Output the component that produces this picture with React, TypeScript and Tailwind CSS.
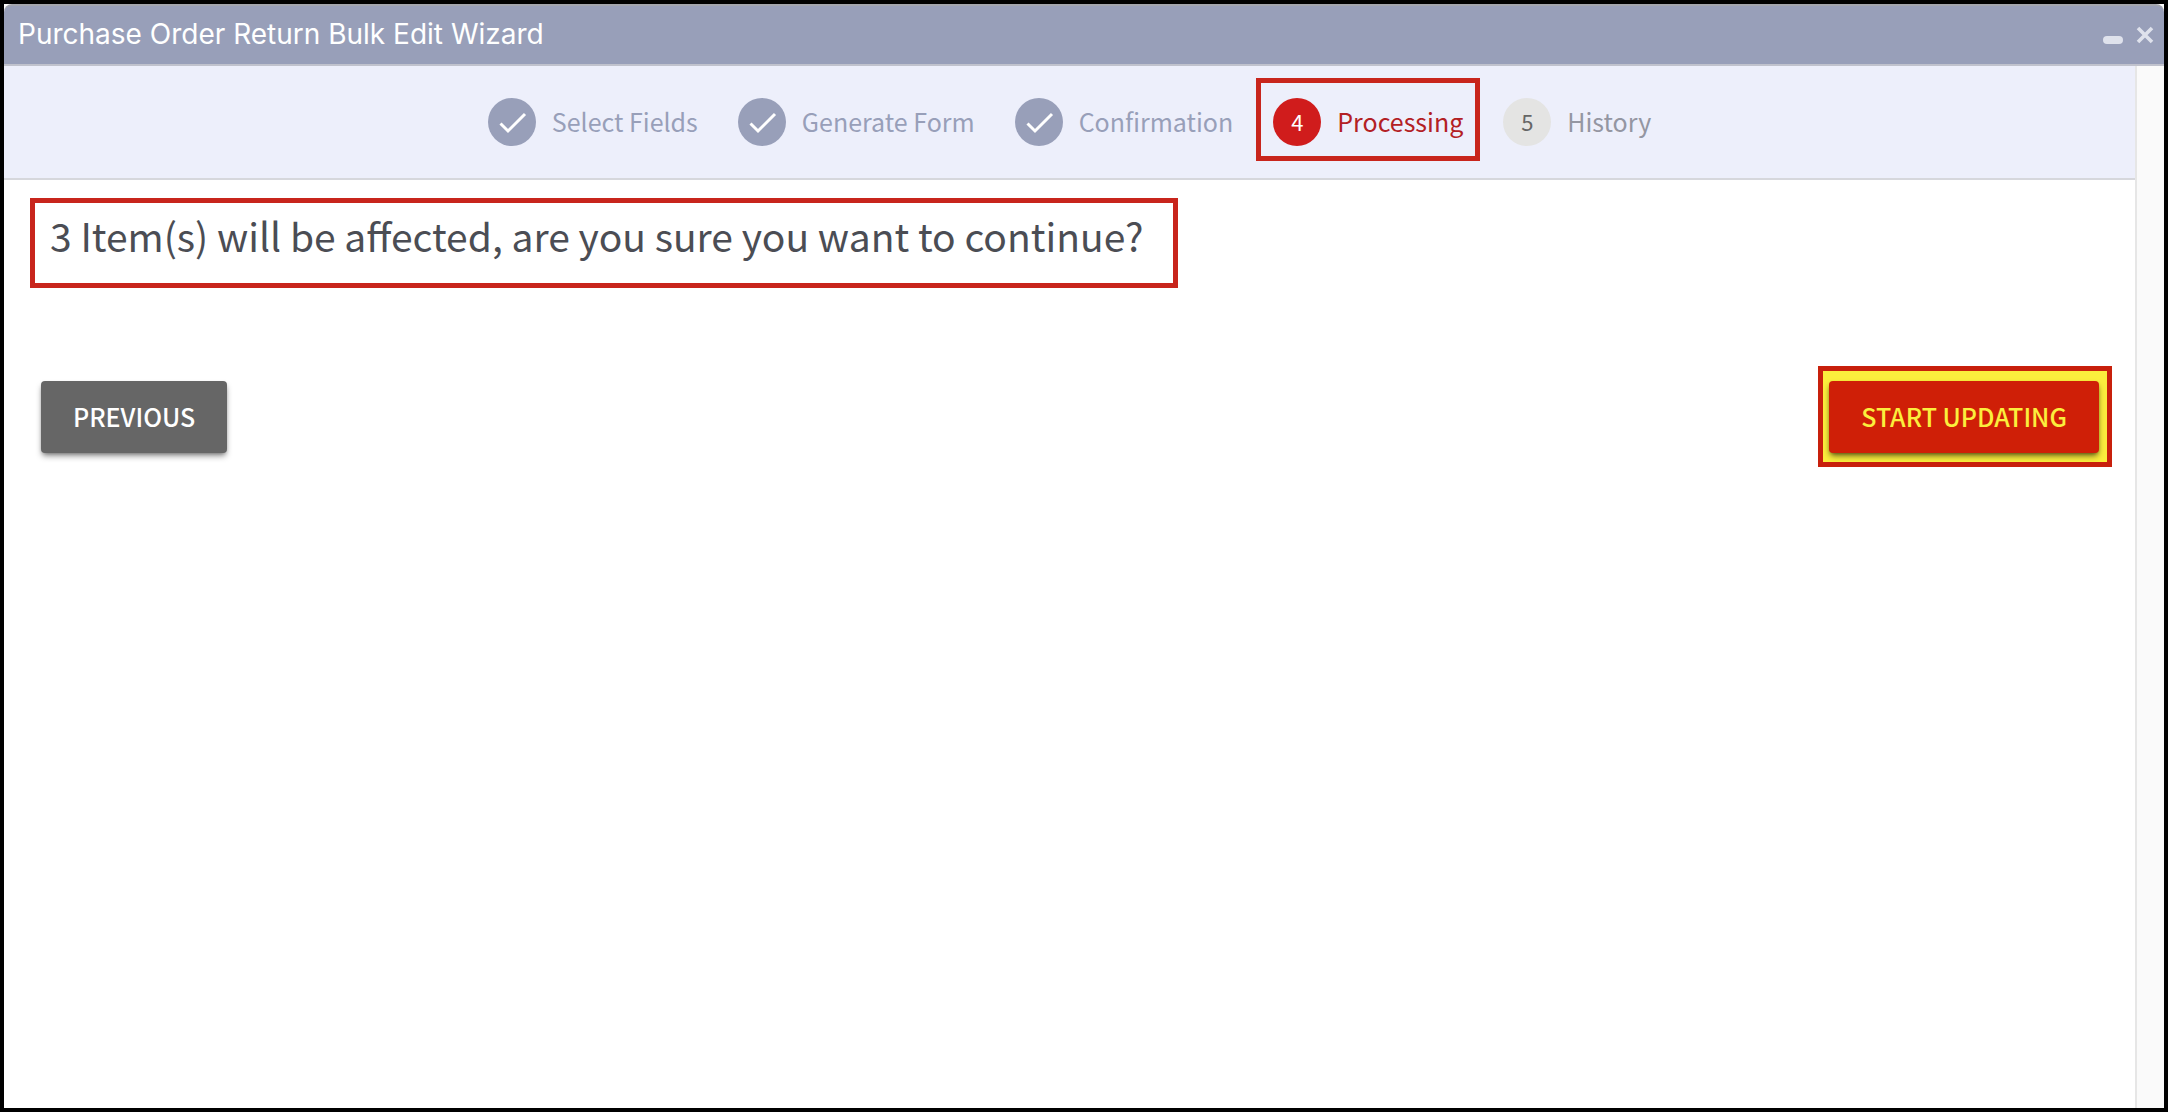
import clsx from "clsx";

type StepStatus = "done" | "active" | "upcoming";

interface Step {
  label: string;
  status: StepStatus;
}

const steps: Step[] = [
  { label: "Select Fields", status: "done" },
  { label: "Generate Form", status: "done" },
  { label: "Confirmation", status: "done" },
  { label: "Processing", status: "active" },
  { label: "History", status: "upcoming" },
];

const CheckIcon = () => (
  <svg viewBox="0 0 48 48" className="h-12 w-12" aria-hidden="true">
    <path
      d="M12.5 25.5 L20 33 L37 16"
      fill="none"
      stroke="currentColor"
      strokeWidth="3"
    />
  </svg>
);

const TitleBar = ({ title }: { title: string }) => (
  <header className="flex h-[62px] shrink-0 items-center justify-between rounded-t-lg border-t-2 border-b-2 border-t-[#a3a5ad] border-b-[#c0c2cd] bg-[#989fb9] pr-[10px] pb-0.5 pl-[14px]">
    <h1 className="font-['Inter',sans-serif] text-[28px] leading-9 text-white">
      {title}
    </h1>
    <div className="flex items-center gap-3 text-[#dfe2ec]">
      <button type="button" aria-label="Minimize">
        <svg viewBox="0 0 22 22" className="h-[22px] w-[22px]">
          <rect x="1" y="13" width="20" height="8" rx="4" fill="currentColor" />
        </svg>
      </button>
      <button type="button" aria-label="Close">
        <svg viewBox="0 0 18 22" className="h-[22px] w-[18px]">
          <path
            d="M2 5 L16 19 M16 5 L2 19"
            stroke="currentColor"
            strokeWidth="3.6"
          />
        </svg>
      </button>
    </div>
  </header>
);

const StepItem = ({ step, index }: { step: Step; index: number }) => {
  const { label, status } = step;
  return (
    <li
      className="relative flex items-center gap-4"
      aria-current={status === "active" ? "step" : undefined}
    >
      <span
        className={clsx(
          "flex h-12 w-12 shrink-0 items-center justify-center rounded-full text-[22px] leading-8",
          status === "done" && "bg-[#989fb9] text-white",
          status === "active" && "bg-[#d01c1c] pb-0.5 text-white",
          status === "upcoming" && "bg-[#e4e4e3] pb-0.5 text-[#666666]"
        )}
      >
        {status === "done" ? <CheckIcon /> : index + 1}
      </span>
      <span
        className={clsx(
          "pb-0.5 text-[25px] leading-8 whitespace-nowrap",
          status === "done" && "text-[#989fb9]",
          status === "active" && "text-[#b32024]",
          status === "upcoming" && "text-[#9496a2]"
        )}
      >
        {label}
      </span>
      {status === "active" && (
        <span className="pointer-events-none absolute -inset-x-[17px] -top-5 -bottom-[15px] border-5 border-[#c8251c]" />
      )}
    </li>
  );
};

const App = () => {
  return (
    <div className="flex h-screen flex-col border-4 border-black bg-white font-['Noto_Sans_CJK_SC',sans-serif]">
      <TitleBar title="Purchase Order Return Bulk Edit Wizard" />
      <div className="flex min-h-0 flex-1">
        <main className="min-w-0 flex-1">
          <nav className="border-b-2 border-[#d6d7dc] bg-[#edeffb] py-8">
            <ol className="flex items-center justify-center gap-10">
              {steps.map((step, index) => (
                <StepItem key={step.label} step={step} index={index} />
              ))}
            </ol>
          </nav>

          <section className="pt-[18px] pr-[23px] pl-[26px]">
            <p className="w-fit border-5 border-[#c8251c] pt-2 pr-[30px] pb-6 pl-[15px] text-[39px] leading-[48px] text-[#4b4d54]">
              3 Item(s) will be affected, are you sure you want to continue?
            </p>

            <div className="mt-[78px] flex items-center justify-between pl-[11px]">
              <button
                type="button"
                className="h-[72px] rounded bg-[#666666] px-8 pb-0.5 text-[25px] leading-8 font-medium text-white shadow-md shadow-black/40"
              >
                PREVIOUS
              </button>
              <div className="border-5 border-[#c8200c] bg-[#fbee3d] pt-[10px] pr-2 pb-[9px] pl-[6px]">
                <button
                  type="button"
                  className="block h-[72px] rounded bg-[#cf1f07] px-8 pb-0.5 text-[25px] leading-8 font-medium text-[#fbee3d] shadow-md shadow-black/50"
                >
                  START UPDATING
                </button>
              </div>
            </div>
          </section>
        </main>
        <div className="w-[29px] shrink-0 border-l-2 border-[#e6e6e6] bg-[#fafafa]" />
      </div>
    </div>
  );
};

export default App;
